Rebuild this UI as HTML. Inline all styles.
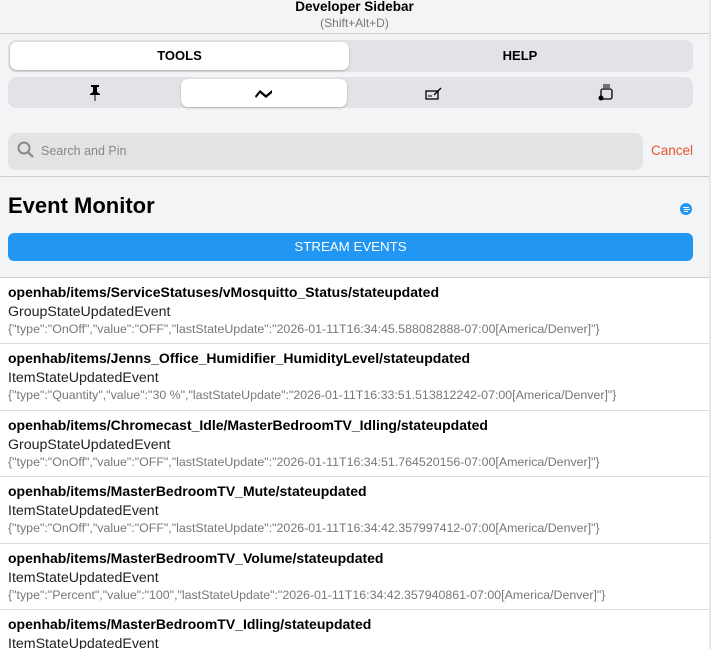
<!DOCTYPE html>
<html style="height:649px;overflow:hidden"><head><meta charset="utf-8"><style>
*{box-sizing:border-box;margin:0;padding:0}
body{width:711px;height:649px;overflow:hidden;background:#f3f4f6;font-family:"Liberation Sans",sans-serif;color:#000;position:relative}
.hdr{position:absolute;left:0;top:0;width:709px;height:34px;border-bottom:1px solid #cfcfcf;text-align:center}
.hdr .t{font-weight:bold;font-size:13.5px;line-height:14px}
.hdr .s{font-size:12px;color:#777;line-height:18px}
.seg{position:absolute;left:8px;width:685px;background:#e2e3e6;border-radius:8px}
.seg div{position:absolute;top:2px;height:28px;text-align:center;font-size:13px;line-height:28px}
.act{background:#fff;border-radius:7px;box-shadow:0 1px 2px rgba(0,0,0,.25)}
.search{position:absolute;left:8px;top:133px;width:635px;height:37px;background:#e3e3e4;border-radius:8px}
.search span{position:absolute;left:33px;top:11px;font-size:12.5px;color:#888}
.cancel{position:absolute;left:651px;top:143px;font-size:13.5px;color:#e5542e}
.line{position:absolute;left:0;width:709px;height:1px;background:#cdcdcd}
h1{position:absolute;left:8px;top:193px;font-size:22px;font-weight:bold}
.dot{position:absolute;left:680px;top:203px;width:12px;height:12px;border-radius:50%;background:#2196f3}
.dot i{position:absolute;left:3px;height:1px;background:#fff}
.btn{position:absolute;left:8px;top:233px;width:685px;height:28px;background:#2196f3;border-radius:6px;color:#fff;text-align:center;font-size:13.3px;line-height:27px}
.list{position:absolute;left:0;top:278px;width:709px;height:371px;background:#fff;overflow:hidden}
.row{height:66.4px;border-bottom:1px solid #ddd;padding:5px 8px 0;white-space:nowrap}
.row b{display:block;font-size:14px;line-height:18px}
.row .e{font-size:14.2px;line-height:22px;color:#222}
.row .j{font-size:12.4px;line-height:13px;color:#777}
.rb{position:absolute;left:709px;top:0;width:2px;height:649px;background:#e7e7e7}
</style></head><body>
<div class="hdr"><div class="t">Developer Sidebar</div><div class="s">(Shift+Alt+D)</div></div>
<div class="seg" style="top:40px;height:32px">
<div class="act" style="left:2px;width:339px;font-weight:bold">TOOLS</div>
<div style="left:341px;width:342px;font-weight:bold">HELP</div></div>
<div class="seg" style="top:77px;height:31px">
<div style="left:2px;width:170px"><svg width="14" height="18" viewBox="0 0 14 18" style="margin-top:5px"><path d="M3 1h8v2H9v5l3 2v1H2v-1l3-2V3H3z M6.5 11h1v6h-1z" fill="#000"/></svg></div>
<div class="act" style="left:173px;width:166px"><svg width="20" height="14" viewBox="0 0 20 14" style="margin-top:7px"><path d="M1 10 L6 4 L12 9 L18 4 L18 7 L12 12 L6 7 L2 12z" fill="#000"/></svg></div>
<div style="left:340px;width:172px"><svg width="18" height="14" viewBox="0 0 18 14" style="margin-top:8px"><rect x="1" y="4" width="12" height="8" fill="none" stroke="#000" stroke-width="1.3"/><path d="M9 8l7-7" stroke="#000" stroke-width="1.3"/><path d="M3 9h4" stroke="#000"/></svg></div>
<div style="left:512px;width:172px"><svg width="18" height="18" viewBox="0 0 18 18" style="margin-top:5px"><path d="M6 1h7M6 3h7" stroke="#000"/><rect x="4" y="5" width="11" height="10" rx="2" fill="none" stroke="#000" stroke-width="1.3"/><circle cx="4" cy="14" r="2.5" fill="#000"/></svg></div>
</div>
<div class="search"><svg width="20" height="20" viewBox="0 0 20 20" style="position:absolute;left:8px;top:7px"><circle cx="8" cy="8" r="5.5" fill="none" stroke="#888" stroke-width="2"/><path d="M12 12l5 5" stroke="#888" stroke-width="2.2"/></svg><span>Search and Pin</span></div>
<div class="cancel">Cancel</div>
<div class="line" style="top:176px"></div>
<h1>Event Monitor</h1>
<div class="dot"><i style="top:4px;width:6px"></i><i style="top:6px;width:6px;left:3.5px"></i><i style="top:8px;width:4px;left:4px"></i></div>
<div class="btn">STREAM EVENTS</div>
<div class="line" style="top:277px"></div>
<div class="list">
<div class="row"><b>openhab/items/ServiceStatuses/vMosquitto_Status/stateupdated</b><div class="e">GroupStateUpdatedEvent</div><div class="j">{"type":"OnOff","value":"OFF","lastStateUpdate":"2026-01-11T16:34:45.588082888-07:00[America/Denver]"}</div></div>
<div class="row"><b>openhab/items/Jenns_Office_Humidifier_HumidityLevel/stateupdated</b><div class="e">ItemStateUpdatedEvent</div><div class="j">{"type":"Quantity","value":"30 %","lastStateUpdate":"2026-01-11T16:33:51.513812242-07:00[America/Denver]"}</div></div>
<div class="row"><b>openhab/items/Chromecast_Idle/MasterBedroomTV_Idling/stateupdated</b><div class="e">GroupStateUpdatedEvent</div><div class="j">{"type":"OnOff","value":"OFF","lastStateUpdate":"2026-01-11T16:34:51.764520156-07:00[America/Denver]"}</div></div>
<div class="row"><b>openhab/items/MasterBedroomTV_Mute/stateupdated</b><div class="e">ItemStateUpdatedEvent</div><div class="j">{"type":"OnOff","value":"OFF","lastStateUpdate":"2026-01-11T16:34:42.357997412-07:00[America/Denver]"}</div></div>
<div class="row"><b>openhab/items/MasterBedroomTV_Volume/stateupdated</b><div class="e">ItemStateUpdatedEvent</div><div class="j">{"type":"Percent","value":"100","lastStateUpdate":"2026-01-11T16:34:42.357940861-07:00[America/Denver]"}</div></div>
<div class="row"><b>openhab/items/MasterBedroomTV_Idling/stateupdated</b><div class="e">ItemStateUpdatedEvent</div></div>
</div>
<div class="rb"></div>
</body></html>
